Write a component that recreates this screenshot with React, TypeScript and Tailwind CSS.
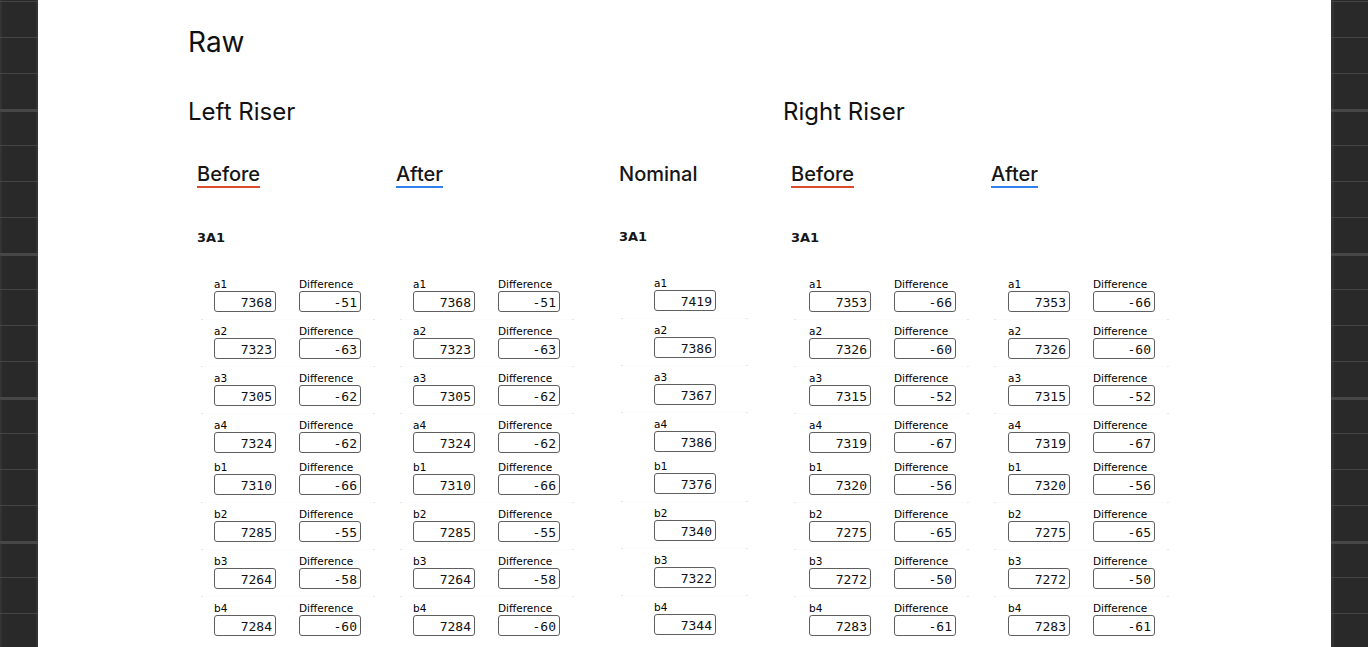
const labels = ['a1', 'a2', 'a3', 'a4', 'b1', 'b2', 'b3', 'b4'];
// rows followed by a faint rule (none between a4 and b1)
const ruled = [true, true, true, false, true, true, true, false];

const leftValues = [7368, 7323, 7305, 7324, 7310, 7285, 7264, 7284];
const leftDiffs = [-51, -63, -62, -62, -66, -55, -58, -60];
const nominal = [7419, 7386, 7367, 7386, 7376, 7340, 7322, 7344];
const rightValues = [7353, 7326, 7315, 7319, 7320, 7275, 7272, 7283];
const rightDiffs = [-66, -60, -52, -67, -56, -65, -50, -61];

function SidePanel({ side }: { side: 'left' | 'right' }) {
  return (
    <div
      className={
        side === 'left'
          ? 'w-[38px] shrink-0 bg-[#292929] border-x-2 border-[#333] pt-px'
          : 'w-[37px] shrink-0 bg-[#292929] border-l-[3px] border-[#333] pt-px'
      }
    >
      {Array.from({ length: 18 }).map((_, i) => (
        <div
          key={i}
          className={
            i % 4 === 3
              ? 'h-[36px] border-t-[3px] border-[#474747] -mx-[3px]'
              : 'h-[36px] border-t border-[#444] -mx-[3px]'
          }
        />
      ))}
    </div>
  );
}

function Field({ label, value }: { label: string; value: number }) {
  return (
    <div className="w-[62px]">
      <div className="font-['DejaVu_Sans',sans-serif] text-[10.5px] leading-[13px] text-black">{label}</div>
      <div className="h-[21px] rounded-[3px] border border-[#5f5f5f] pr-[3px] pt-[2px] text-right font-['DejaVu_Sans_Mono',monospace] text-[13px] leading-[18px] text-[#111] overflow-hidden">
        {value}
      </div>
    </div>
  );
}

interface ColumnProps {
  title: string;
  accent?: string;
  values: number[];
  diffs?: number[];
  width: string;
  inset: string;
  rule: string;
  tag?: boolean;
}

function Column({ title, accent, values, diffs, width, inset, rule, tag }: ColumnProps) {
  return (
    <div className={`${width} shrink-0`}>
      <div className="mt-[34px]">
        <span
          className={`inline-block font-['Inter',sans-serif] text-[20px] font-medium leading-6 text-[#161616] ${
            accent === 'red'
              ? 'border-b-2 border-[#dc4c2c]'
              : accent === 'blue'
              ? 'border-b-2 border-[#2f80ed]'
              : 'border-b border-transparent'
          }`}
        >
          {title}
        </span>
      </div>
      <div className="mt-[42px] h-4 font-['DejaVu_Sans',sans-serif] text-[13px] font-bold leading-4 text-[#161616]">
        {tag ? '3A1' : ''}
      </div>
      <div className="mt-[32px]">
        {labels.map((l, i) => (
          <div key={l}>
            <div className={`flex gap-[23px] ${inset}`}>
              <Field label={l} value={values[i]} />
              {diffs && <Field label="Difference" value={diffs[i]} />}
            </div>
            {ruled[i] ? (
              <div className={`mt-[7px] mb-[5px] h-px flex justify-between bg-[#fcfcfc] ${rule}`}>
                <span className="w-[2px] bg-[#e6e6e6]" />
                <span className="w-[2px] bg-[#e6e6e6]" />
              </div>
            ) : (
              <div className="h-[8px]" />
            )}
          </div>
        ))}
      </div>
    </div>
  );
}

function RiserHeading({ children }: { children?: React.ReactNode }) {
  return (
    <h2 className="mt-[37px] h-[32px] font-['Inter',sans-serif] text-[24px] leading-8 text-[#111]">{children}</h2>
  );
}

export default function App() {
  return (
    <div className="flex min-h-screen bg-[#292929]">
      <SidePanel side="left" />
      <main className="flex-1 bg-white pl-[150px] pt-[25px] overflow-hidden">
        <h1 className="font-['Inter',sans-serif] text-[28px] leading-[34px] text-[#111]">Raw</h1>
        <div className="flex">
          <section className="w-[431px] shrink-0">
            <RiserHeading>Left Riser</RiserHeading>
            <div className="flex pl-[9px]">
              <Column title="Before" accent="red" tag values={leftValues} diffs={leftDiffs} width="w-[199px]" inset="pl-[17px]" rule="ml-[4px] w-[174px]" />
              <Column title="After" accent="blue" values={leftValues} diffs={leftDiffs} width="w-[199px]" inset="pl-[17px]" rule="ml-[4px] w-[174px]" />
            </div>
          </section>
          <section className="w-[164px] shrink-0">
            <RiserHeading />
            <Column title="Nominal" tag values={nominal} width="w-[164px]" inset="pl-[35px]" rule="ml-[2px] w-[127px]" />
          </section>
          <section className="shrink-0">
            <RiserHeading>Right Riser</RiserHeading>
            <div className="flex pl-[8px]">
              <Column title="Before" accent="red" tag values={rightValues} diffs={rightDiffs} width="w-[200px]" inset="pl-[18px]" rule="ml-[3px] w-[175px]" />
              <Column title="After" accent="blue" values={rightValues} diffs={rightDiffs} width="w-[200px]" inset="pl-[17px]" rule="ml-[3px] w-[175px]" />
            </div>
          </section>
        </div>
      </main>
      <SidePanel side="right" />
    </div>
  );
}
